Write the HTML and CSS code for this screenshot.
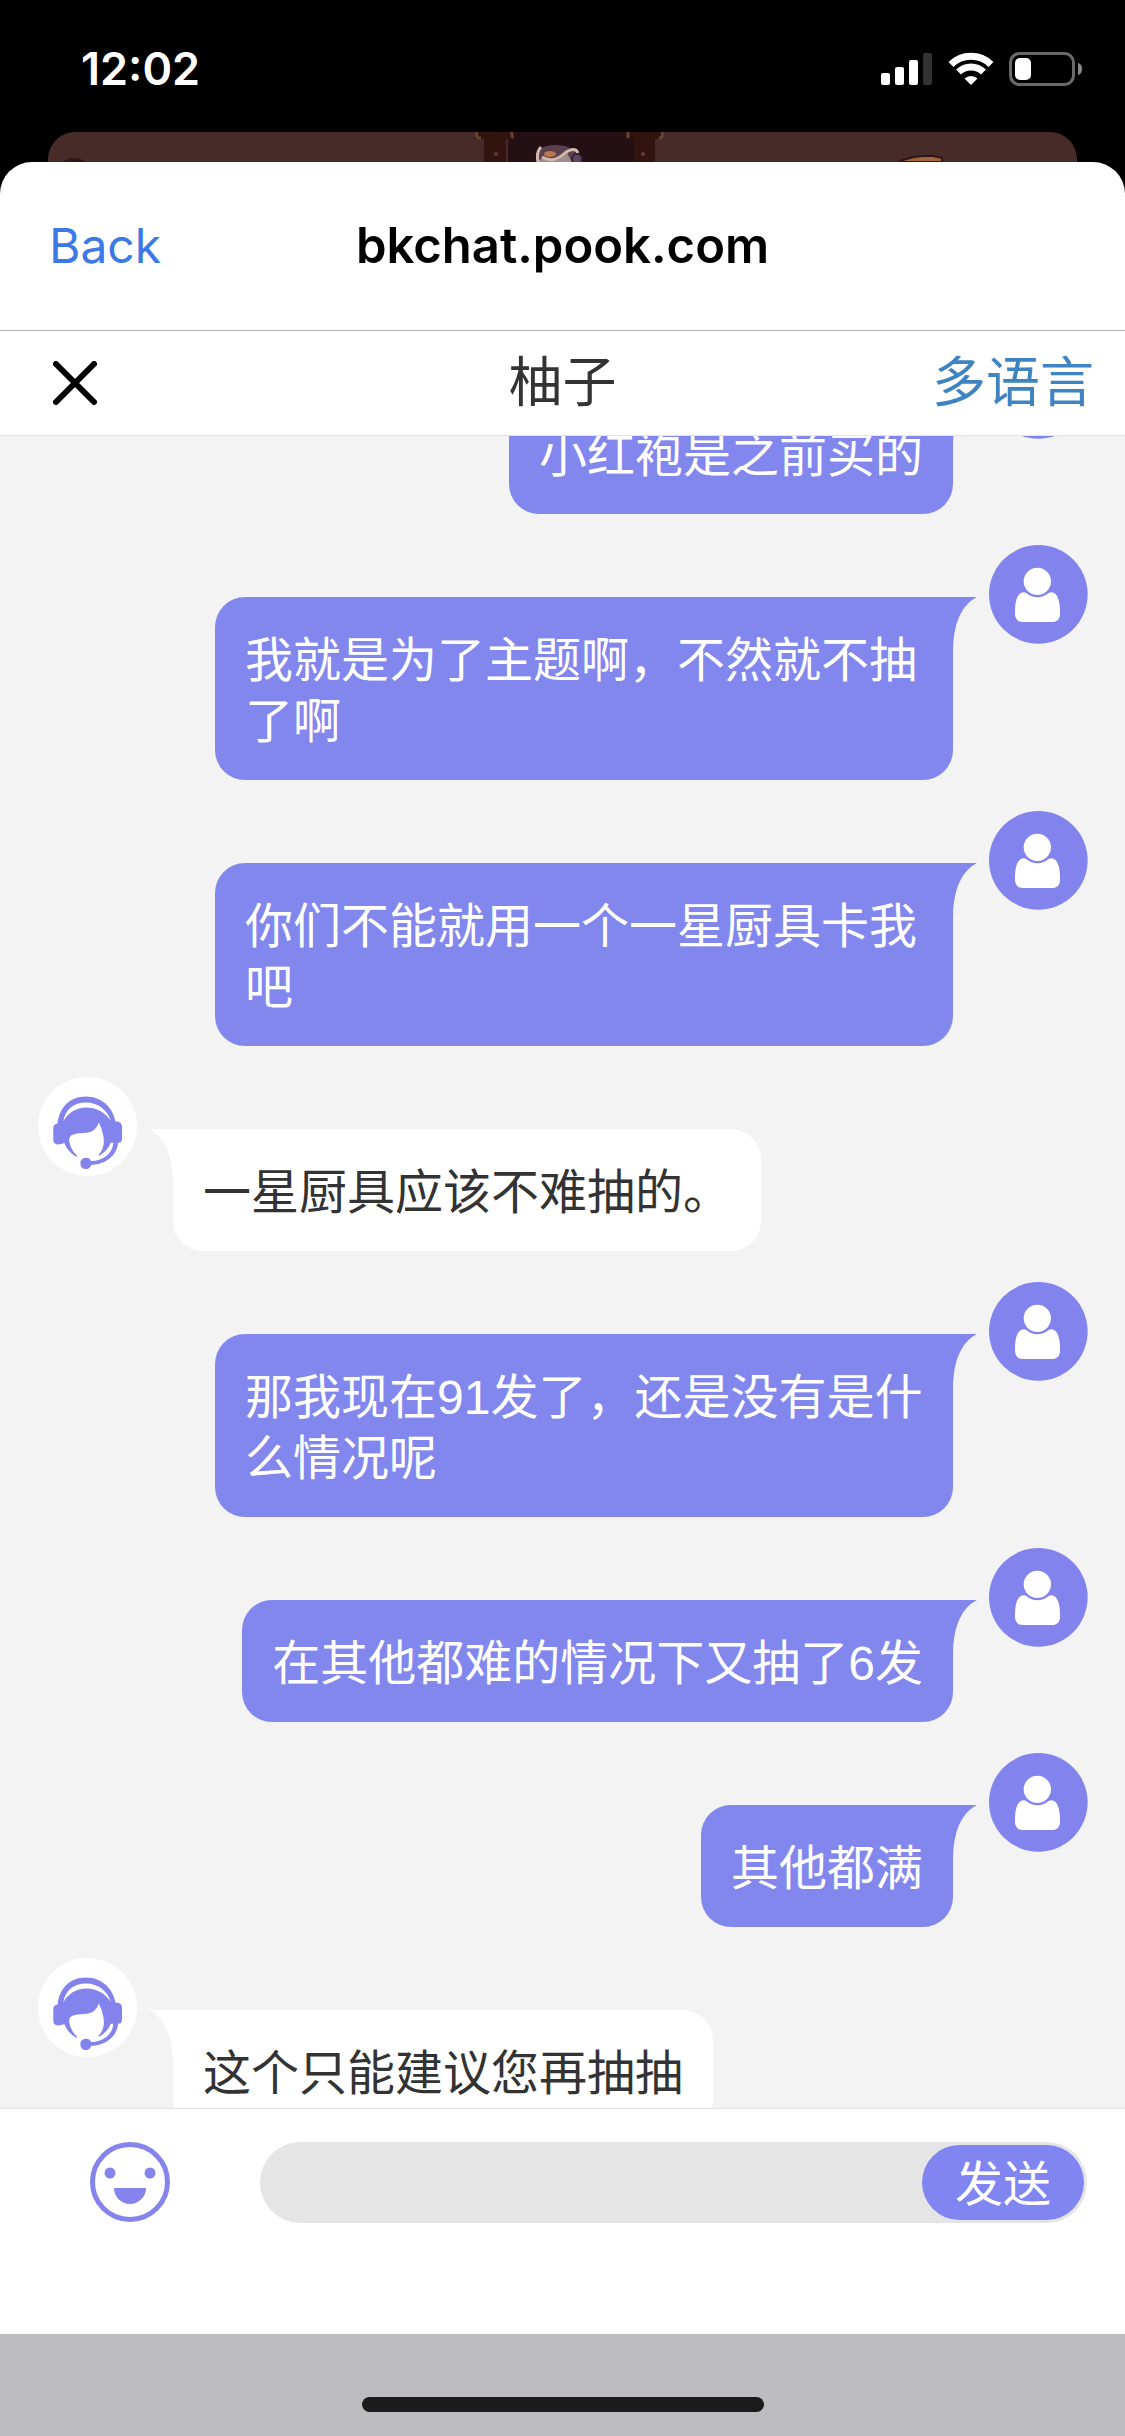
FILE: index.html
```html
<!DOCTYPE html>
<html lang="zh-CN">
<head>
<meta charset="utf-8">
<meta name="viewport" content="width=device-width, initial-scale=1">
<title>柚子 - bkchat.pook.com</title>
<link rel="stylesheet" href="styles.css">
</head>
<body>
<svg class="defs" aria-hidden="true">
  <symbol id="user" viewBox="0 0 297 297">
    <circle cx="148" cy="148" r="148" fill="#8383ee"/>
    <path d="M104 142C84 143 78 172 78 198V206C78 222 88 231 102 231H189C204 231 213 222 213 206V198C213 172 207 143 187 142Q182 142 178 145Q163 157 145 157Q127 157 113 145Q109 142 104 142Z" fill="#fff"/>
    <circle cx="145" cy="109" r="45" fill="#8383ee"/>
    <circle cx="145" cy="109" r="41" fill="#fff"/>
  </symbol>
  <symbol id="agent" viewBox="0 0 298 298">
    <circle cx="149" cy="149" r="149" fill="#fff"/>
    <g fill="#8383ee">
      <path d="M59 140C64 92 96 59 144 59C192 59 226 92 233 134Q253 134 253 150V184Q253 198 241 198C238 235 207 262 160 265Q156 277 146 277A17 17 0 1 1 160 253C194 252 223 235 227 198H219Q210 222 184 237L182 234C198 216 200 201 197 178Q194 158 183 137Q180 149 170 158C151 175 124 163 99 176Q91 186 95 198Q99 219 118 238L116 241Q90 227 79 199Q72 203 60 203Q46 202 46 188V154Q46 142 59 140Z"/>
    </g>
    <path d="M76 134C82 99 107 77 144 77C182 77 210 101 220 134C204 108 178 92 146 92C115 92 89 109 76 134Z" fill="#fff"/>
  </symbol>
  <symbol id="tail" viewBox="0 0 24 54">
    <path d="M0 0H24C8 8 0 28 0 54Z" fill="currentColor"/>
  </symbol>
</svg>

<div class="phone">
  <header class="status">
    <time class="clock">12:02</time>
    <div class="indicators">
      <svg width="52" height="34" viewBox="0 0 52 34" aria-label="信号">
        <g fill="#fff"><rect y="21" width="9" height="12" rx="2"/><rect x="14" y="15" width="9" height="18" rx="2"/><rect x="28" y="8" width="9" height="25" rx="2"/></g>
        <rect x="42" y="1" width="9" height="32" rx="2" fill="#333"/>
      </svg>
      <svg width="46" height="34" viewBox="0 0 46 34" aria-label="无线网络">
        <g fill="none" stroke="#fff" stroke-width="7">
          <path d="M3 12.500A28.500 28.500 0 0 1 43 12.500"/>
          <path d="M10.500 20A18 18 0 0 1 35.500 20"/>
        </g>
        <path d="M23 33L16.500 26.500A9.500 9.500 0 0 1 29.500 26.500Z" fill="#fff"/>
      </svg>
      <svg width="74" height="34" viewBox="0 0 74 34" aria-label="电量">
        <rect x="1.500" y="1.500" width="63" height="31" rx="9" fill="none" stroke="#6a6a6a" stroke-width="3"/>
        <rect x="6" y="6" width="16" height="22" rx="5" fill="#fff"/>
        <path d="M69 11Q73 12 73 17T69 23Z" fill="#8a8a8a"/>
      </svg>
    </div>
  </header>

  <div class="backdrop">
    <svg viewBox="0 0 1029 30" preserveAspectRatio="xMidYMin slice" aria-hidden="true">
      <path d="M14 30Q27 22 38 30Z" fill="#2e1517"/>
      <rect x="460" width="126" height="30" fill="#230f14"/>
      <path d="M427 0H466V7H458V30H436V7H431Z" fill="#32140f"/>
      <path d="M578 0H617L613 7H607V30H586V7H578Z" fill="#32140f"/>
      <path d="M429 0Q427 6 433 6M463 0Q465 4 464 6M580 0V6M614 0Q616 6 611 6" fill="none" stroke="#684334" stroke-width="3"/>
      <circle cx="448" cy="22" r="2" fill="#713a2c"/><circle cx="595" cy="22" r="2" fill="#713a2c"/>
      <path d="M489 30V23Q491 13 507 13Q521 13 526 19L532 30Z" fill="#5c414c"/>
      <path d="M489 30Q493 25 500 27Q512 28 519 21L524 30Z" fill="#a08c8e"/>
      <path d="M490 30Q488 20 493 15M494 25Q505 32 517 21Q527 14 530 21" fill="none" stroke="#d1b9ad" stroke-width="3"/>
      <ellipse cx="502" cy="22" rx="6" ry="3" fill="#bd7552"/>
      <circle cx="529" cy="27" r="5" fill="#5a465e" stroke="#332438" stroke-width="2"/>
      <path d="M850 30Q865 23 885 24L894 26V30Z" fill="#a36540" stroke="#2f1719" stroke-width="2"/>
    </svg>
  </div>

  <main class="sheet">
    <nav class="navbar">
      <a class="back" href="#">Back</a>
      <span class="site">bkchat.pook.com</span>
    </nav>

    <div class="toolbar">
      <button class="close" type="button" aria-label="关闭">
        <svg width="44" height="44" viewBox="0 0 44 44"><path d="M3 3L41 41M41 3L3 41" stroke="#000" stroke-width="6" stroke-linecap="round"/></svg>
      </button>
      <h1 class="title">柚子</h1>
      <a class="language" href="#">多语言</a>
    </div>

    <section class="messages" id="messages" aria-label="聊天记录">
      <div class="message mine">
        <svg class="avatar"><use href="#user"/></svg>
        <p class="bubble"><svg class="tail"><use href="#tail"/></svg>小红袍是之前买的</p>
      </div>
      <div class="message mine">
        <svg class="avatar"><use href="#user"/></svg>
        <p class="bubble"><svg class="tail"><use href="#tail"/></svg>我就是为了主题啊，不然就不抽了啊</p>
      </div>
      <div class="message mine">
        <svg class="avatar"><use href="#user"/></svg>
        <p class="bubble"><svg class="tail"><use href="#tail"/></svg>你们不能就用一个一星厨具卡我吧</p>
      </div>
      <div class="message">
        <svg class="avatar"><use href="#agent"/></svg>
        <p class="bubble"><svg class="tail"><use href="#tail"/></svg>一星厨具应该不难抽的。</p>
      </div>
      <div class="message mine">
        <svg class="avatar"><use href="#user"/></svg>
        <p class="bubble"><svg class="tail"><use href="#tail"/></svg>那我现在91发了，还是没有是什么情况呢</p>
      </div>
      <div class="message mine">
        <svg class="avatar"><use href="#user"/></svg>
        <p class="bubble"><svg class="tail"><use href="#tail"/></svg>在其他都难的情况下又抽了6发</p>
      </div>
      <div class="message mine">
        <svg class="avatar"><use href="#user"/></svg>
        <p class="bubble"><svg class="tail"><use href="#tail"/></svg>其他都满</p>
      </div>
      <div class="message">
        <svg class="avatar"><use href="#agent"/></svg>
        <p class="bubble"><svg class="tail"><use href="#tail"/></svg>这个只能建议您再抽抽</p>
      </div>
    </section>

    <form class="composer">
      <button class="emoji" type="button" aria-label="表情">
        <svg width="80" height="80" viewBox="0 0 80 80">
          <circle cx="40" cy="40" r="37.500" fill="none" stroke="#8484ec" stroke-width="5"/>
          <g fill="#8484ec"><circle cx="20" cy="31" r="5.500"/><circle cx="60" cy="31" r="5.500"/><path d="M24 46H56A16 16 0 0 1 24 46Z"/></g>
        </svg>
      </button>
      <div class="field">
        <input class="input" type="text" aria-label="输入消息">
        <button class="send" type="submit">发送</button>
      </div>
    </form>
  </main>

  <footer class="home"><span class="home-bar"></span></footer>
</div>
<script src="chat.js"></script>
</body>
</html>
```
FILE: chat.js
```
const SCROLL_POSITION = 127;
document.getElementById("messages").scrollTop = SCROLL_POSITION;
```
FILE: styles.css
```css
* {
  box-sizing: border-box;
}

body {
  margin: 0;
  background: #000;
  color: #333;
  font-family: "Liberation Sans", "Noto Sans CJK SC", sans-serif;
}

button,
input {
  margin: 0;
  padding: 0;
  border: 0;
  background: none;
  font: inherit;
}

svg {
  display: block;
  flex: none;
}

a {
  text-decoration: none;
}

.defs {
  position: absolute;
  width: 0;
  height: 0;
}

.phone {
  display: flex;
  flex-direction: column;
  height: 100vh;
}

/* Status bar */
.status {
  display: flex;
  flex: none;
  justify-content: space-between;
  height: 132px;
  padding: 52px 42px 0 81px;
}

.clock {
  color: #fff;
  font: 600 45px/34px Inter, sans-serif;
}

.indicators {
  display: flex;
  gap: 15px;
}

/* Page that sits behind the sheet */
.backdrop {
  flex: none;
  height: 30px;
  margin: 0 48px;
  overflow: hidden;
  border-radius: 27px 27px 0 0;
  background: #462b29;
}

.backdrop svg {
  width: 100%;
  height: 30px;
}

/* Sheet */
.sheet {
  display: flex;
  flex: 1;
  flex-direction: column;
  min-height: 0;
  overflow: hidden;
  border-radius: 32px 32px 0 0;
  background: #fff;
}

.navbar,
.toolbar {
  display: grid;
  flex: none;
  grid-template-columns: 1fr auto 1fr;
  align-items: center;
}

.navbar {
  height: 169px;
  padding: 0 49px;
  border-bottom: 1px solid #b4b4b6;
  font: 49px/60px Inter, sans-serif;
}

.back {
  color: #3c79e6;
  font-size: 48px;
}

.site {
  color: #000;
  font-weight: 600;
}

.toolbar {
  height: 105px;
  padding: 0 31px;
  border-bottom: 1px solid #e6e6e6;
  font-size: 54px;
  line-height: 60px;
}

.close {
  justify-self: start;
  padding-left: 22px;
}

.title {
  margin: 0;
  font-size: inherit;
  font-weight: 400;
}

.language {
  justify-self: end;
  color: #3f84c0;
}

/* Conversation */
.messages {
  display: flex;
  flex: 1;
  flex-direction: column;
  gap: 31px;
  min-height: 0;
  padding: 31px 37px 31px 38px;
  overflow-y: auto;
  background: #f3f3f3;
  scrollbar-width: none;
}

.message {
  display: flex;
  flex: none;
  gap: 36px;
  align-items: flex-start;
}

.mine {
  flex-direction: row-reverse;
}

.avatar {
  width: 99px;
  height: 99px;
}

.bubble {
  position: relative;
  max-width: calc(100% - 312px);
  margin: 52px 0 0;
  padding: 33px 30px 28px;
  border-radius: 0 30px 30px 30px;
  background: #fff;
  font-size: 48px;
  line-height: 61px;
}

.mine .bubble {
  border-radius: 30px 0 30px 30px;
  background: #8287ee;
  color: #fff;
}

.tail {
  position: absolute;
  top: 0;
  right: 100%;
  width: 24px;
  height: 54px;
  color: #fff;
  transform: scaleX(-1);
}

.mine .tail {
  right: auto;
  left: 100%;
  color: #8287ee;
  transform: none;
}

/* Composer */
.composer {
  display: flex;
  flex: none;
  gap: 90px;
  align-items: flex-start;
  height: 226px;
  padding: 33px 38px 0 90px;
  border-top: 1px solid #e3e3e3;
}

.field {
  display: flex;
  flex: 1;
  align-items: center;
  min-width: 0;
  height: 81px;
  padding: 3px;
  border-radius: 41px;
  background: #e5e5e5;
}

.input {
  flex: 1;
  min-width: 0;
  height: 75px;
  padding: 0 30px;
  outline: 0;
  font-size: 48px;
}

.send {
  flex: none;
  width: 162px;
  height: 75px;
  padding-top: 4px;
  border-radius: 38px;
  background: #8085f2;
  color: #fff;
  font-size: 48px;
  line-height: 71px;
}

/* Home indicator */
.home {
  display: flex;
  flex: none;
  justify-content: center;
  height: 102px;
  padding-top: 63px;
  background: #bdbcc1;
}

.home-bar {
  width: 402px;
  height: 15px;
  border-radius: 8px;
  background: #1b1b1b;
}
```
